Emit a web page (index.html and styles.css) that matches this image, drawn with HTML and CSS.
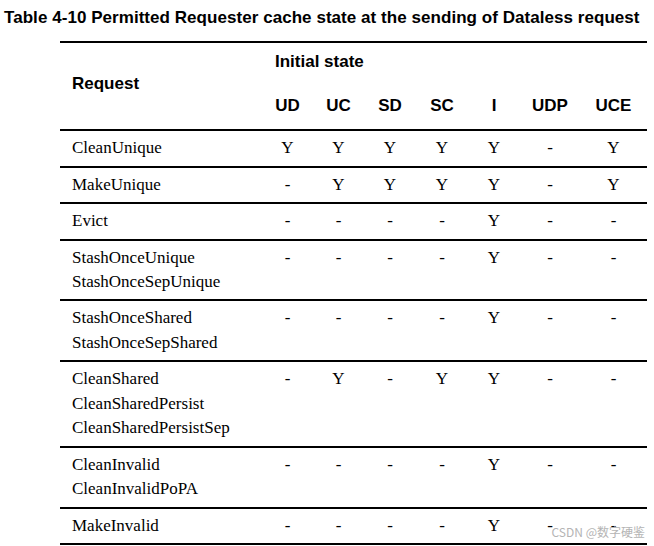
FILE: index.html
```html
<!DOCTYPE html>
<html>
<head>
<meta charset="utf-8">
<link rel="stylesheet" href="styles.css">
</head>
<body>
<div class="title">Table 4-10 Permitted Requester cache state at the sending of Dataless request</div>
<div class="table">
  <div class="head">
    <div class="req">Request</div>
    <div class="init">Initial state</div>
    <div class="st">UD</div><div class="st">UC</div><div class="st">SD</div><div class="st">SC</div><div class="st">I</div><div class="st">UDP</div><div class="st">UCE</div>
  </div>
  <div class="row">
    <div class="name">CleanUnique</div>
    <div class="c">Y</div><div class="c">Y</div><div class="c">Y</div><div class="c">Y</div><div class="c">Y</div><div class="c">-</div><div class="c">Y</div>
  </div>
  <div class="row">
    <div class="name">MakeUnique</div>
    <div class="c">-</div><div class="c">Y</div><div class="c">Y</div><div class="c">Y</div><div class="c">Y</div><div class="c">-</div><div class="c">Y</div>
  </div>
  <div class="row">
    <div class="name">Evict</div>
    <div class="c">-</div><div class="c">-</div><div class="c">-</div><div class="c">-</div><div class="c">Y</div><div class="c">-</div><div class="c">-</div>
  </div>
  <div class="row">
    <div class="name">StashOnceUnique<br>StashOnceSepUnique</div>
    <div class="c">-</div><div class="c">-</div><div class="c">-</div><div class="c">-</div><div class="c">Y</div><div class="c">-</div><div class="c">-</div>
  </div>
  <div class="row">
    <div class="name">StashOnceShared<br>StashOnceSepShared</div>
    <div class="c">-</div><div class="c">-</div><div class="c">-</div><div class="c">-</div><div class="c">Y</div><div class="c">-</div><div class="c">-</div>
  </div>
  <div class="row">
    <div class="name">CleanShared<br>CleanSharedPersist<br>CleanSharedPersistSep</div>
    <div class="c">-</div><div class="c">Y</div><div class="c">-</div><div class="c">Y</div><div class="c">Y</div><div class="c">-</div><div class="c">-</div>
  </div>
  <div class="row">
    <div class="name">CleanInvalid<br>CleanInvalidPoPA</div>
    <div class="c">-</div><div class="c">-</div><div class="c">-</div><div class="c">-</div><div class="c">Y</div><div class="c">-</div><div class="c">-</div>
  </div>
  <div class="row">
    <div class="name">MakeInvalid</div>
    <div class="c">-</div><div class="c">-</div><div class="c">-</div><div class="c">-</div><div class="c">Y</div><div class="c">-</div><div class="c">-</div>
  </div>
</div>
<div class="wm">CSDN @数字硬鉴</div>
</body>
</html>
```

FILE: styles.css
```css
html, body {
  margin: 0;
  padding: 0;
  background: #ffffff;
  color: #000000;
}
body {
  width: 654px;
  height: 546px;
  position: relative;
  overflow: hidden;
}
.title {
  font-family: "Liberation Sans", Arial, sans-serif;
  font-weight: bold;
  font-size: 17px;
  line-height: 20px;
  letter-spacing: 0.05px;
  padding: 8px 0 13px 4px;
  white-space: nowrap;
}
.table {
  margin-left: 60px;
  width: 587px;
  border-top: 2px solid #000;
}
.head, .row {
  display: grid;
  grid-template-columns: 202px 51px 51px 52px 52px 52px 60px 67px;
  border-bottom: 2px solid #000;
}
.head {
  grid-template-rows: 24px 24px;
  row-gap: 20px;
  padding: 7px 0 11px;
  font-family: "Liberation Sans", Arial, sans-serif;
  font-weight: bold;
  font-size: 17px;
  line-height: 24px;
}
.req {
  grid-row: 1 / 3;
  grid-column: 1;
  align-self: center;
  padding-left: 12px;
  margin-top: -1px;
}
.init {
  grid-row: 1;
  grid-column: 2 / -1;
  padding-left: 13px;
}
.st {
  grid-row: 2;
  text-align: center;
}
.row {
  padding: 5px 0 5.1px;
  font-family: "Liberation Serif", "Times New Roman", serif;
  font-size: 17px;
  line-height: 24.4px;
}
.name {
  padding-left: 12px;
  white-space: nowrap;
}
.c {
  text-align: center;
}
.wm {
  position: absolute;
  right: 9px;
  bottom: 7px;
  font-family: "Noto Sans CJK SC", "DejaVu Sans", sans-serif;
  font-size: 12px;
  line-height: 14px;
  color: #b4b4b4;
}
```
